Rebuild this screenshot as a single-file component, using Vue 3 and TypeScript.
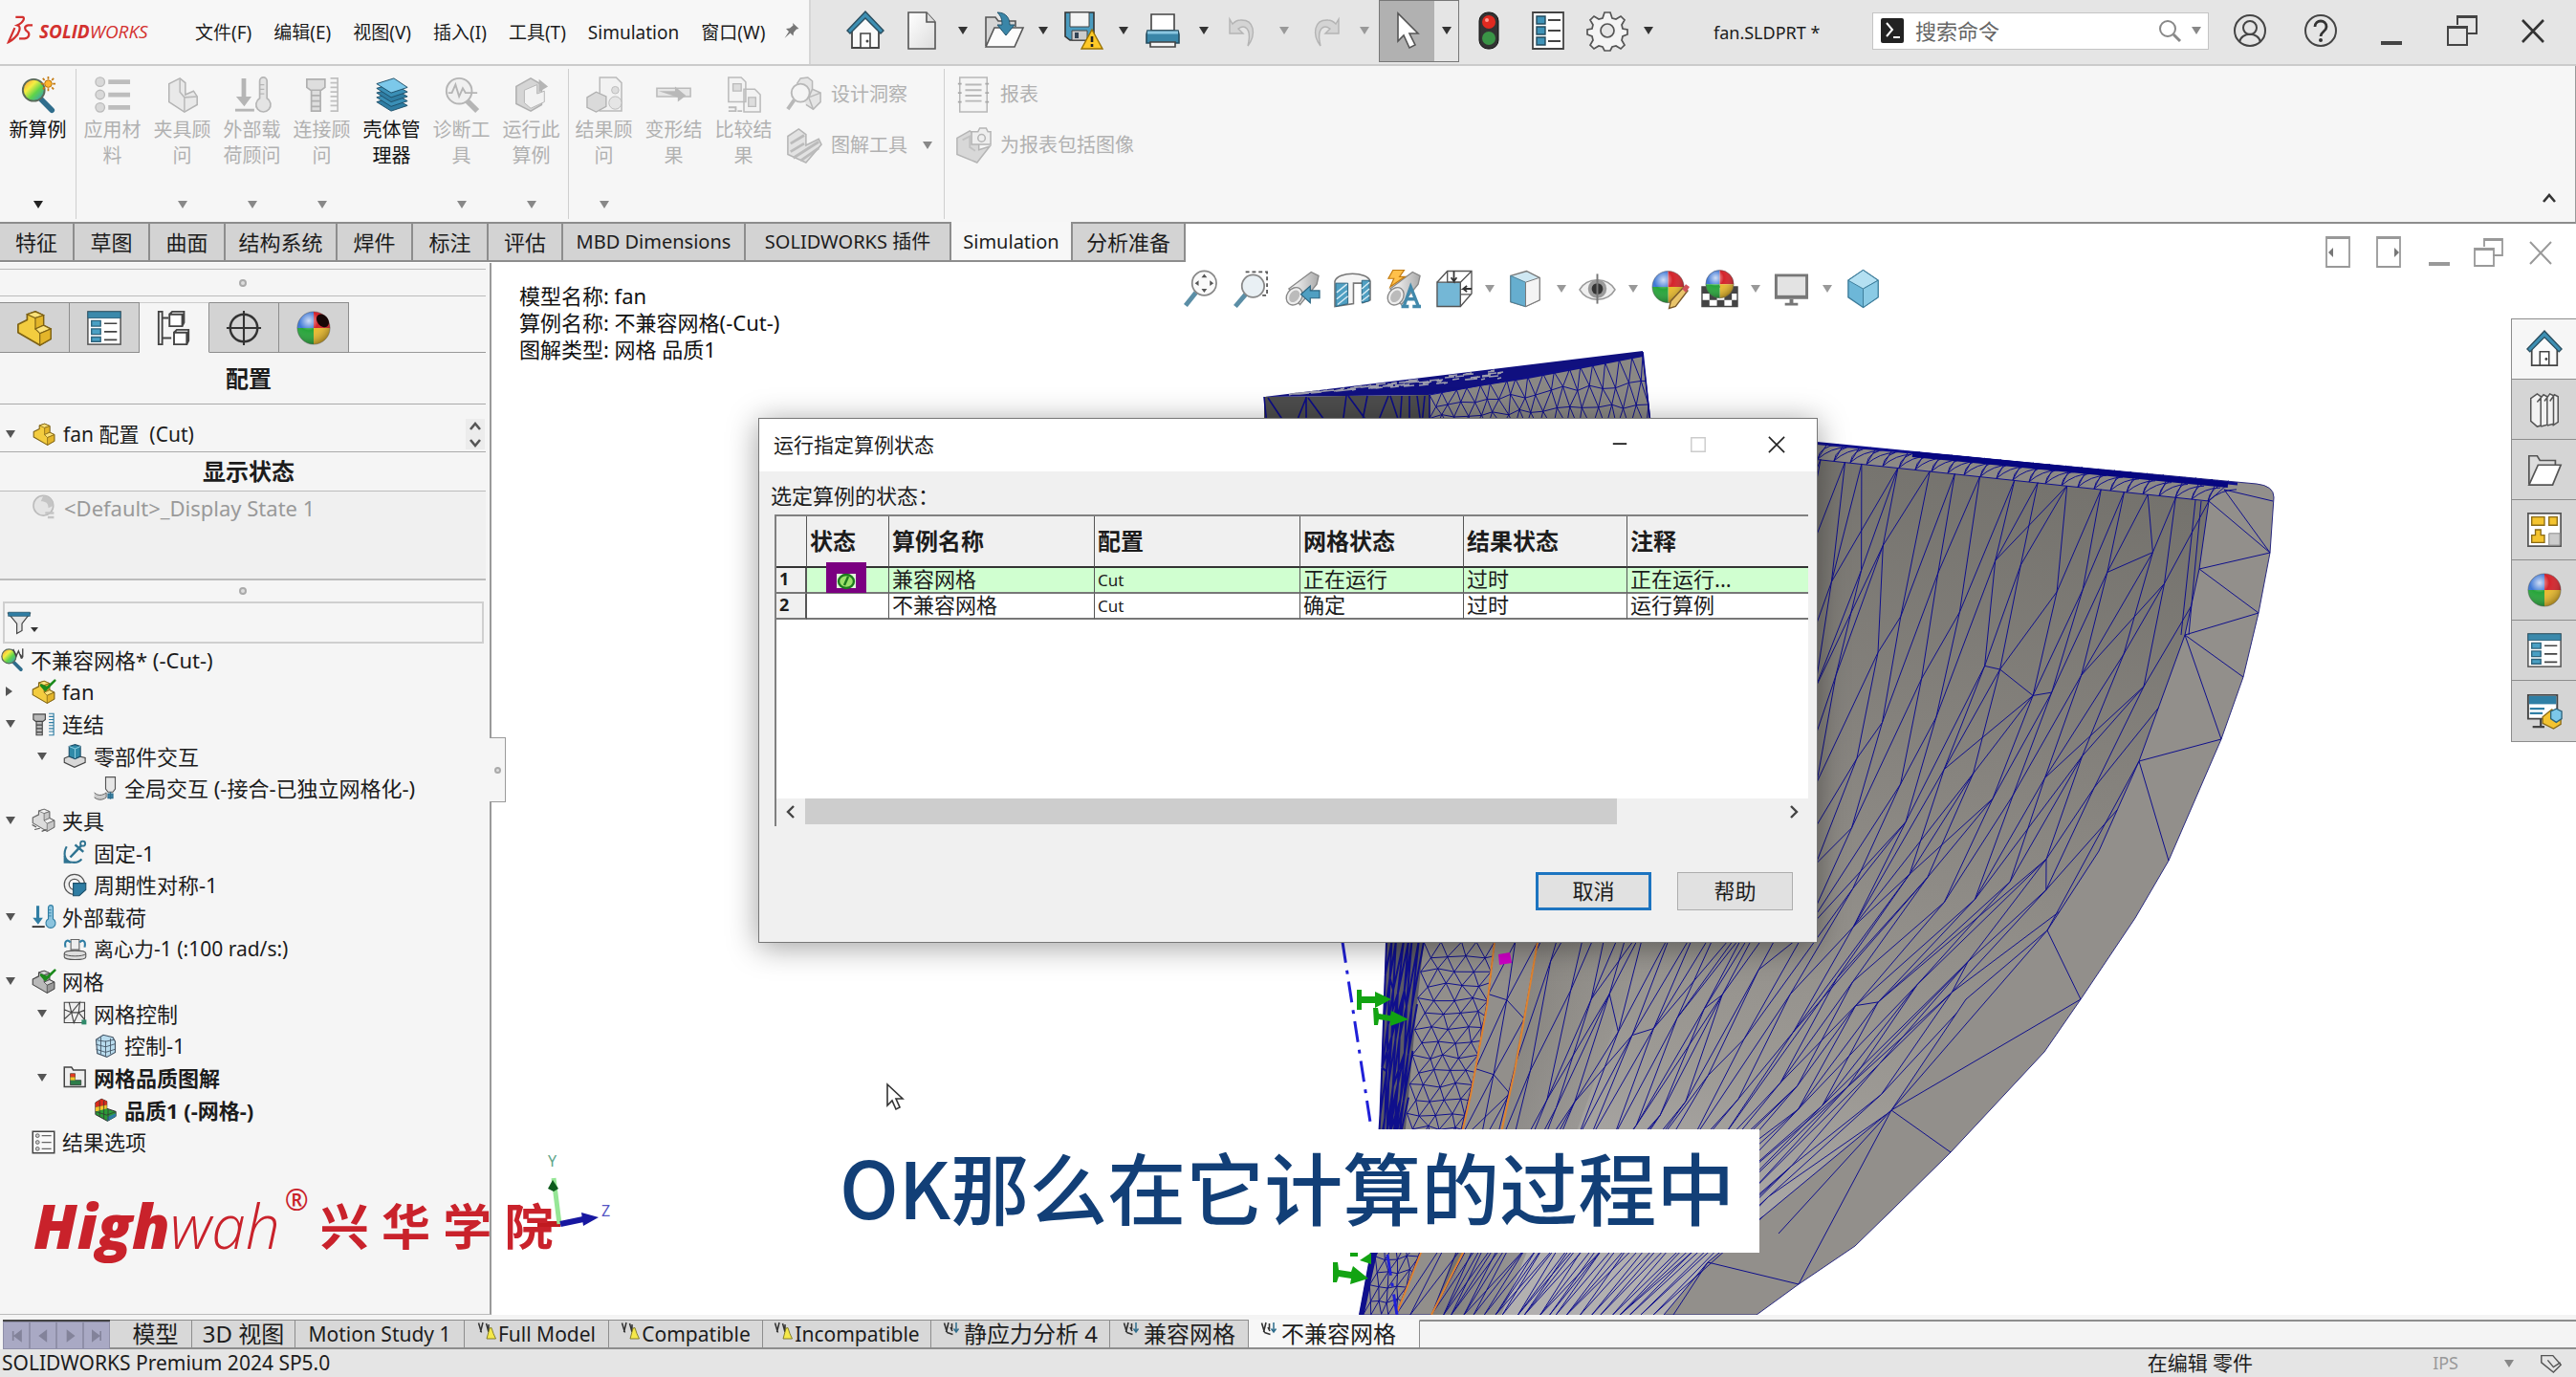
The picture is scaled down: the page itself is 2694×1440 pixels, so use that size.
<script setup lang="ts">
type Pt = [number, number]

/* ---------- icons, all on a 40 x 40 grid ---------- */
const ball = (cx: number, cy: number, r: number): string =>
  `<path d="M${cx} ${cy}V${cy - r}A${r} ${r} 0 0 0 ${cx - r} ${cy}z" fill="#3f78d6"/>` +
  `<path d="M${cx} ${cy}H${cx + r}A${r} ${r} 0 0 0 ${cx} ${cy - r}z" fill="#d4232b"/>` +
  `<path d="M${cx} ${cy}V${cy + r}A${r} ${r} 0 0 0 ${cx + r} ${cy}z" fill="#e8b92c"/>` +
  `<path d="M${cx} ${cy}H${cx - r}A${r} ${r} 0 0 0 ${cx} ${cy + r}z" fill="#27a53a"/>` +
  `<circle cx="${cx}" cy="${cy}" r="${r}" fill="url(#shine)" stroke="#555" stroke-opacity=".5"/>`

const part = (a: string, b: string, c: string, s: string): string =>
  `<path d="M2 16l10-5V5l9-3 9 4v11l8 4v11l-12 7L2 25z" fill="${a}" stroke="${s}" stroke-width="1.8" stroke-linejoin="round"/>` +
  `<path d="M12 5l9-3 9 4-9 3z" fill="${b}" stroke="${s}" stroke-width="1.2"/><path d="M21 9l9-3v11l-9 4z" fill="${c}" stroke="${s}" stroke-width="1.2"/>` +
  `<path d="M21 21l9-4 8 4-12 5z" fill="${b}" stroke="${s}" stroke-width="1.2"/><path d="M26 26l12-5v11l-12 7z" fill="${c}" stroke="${s}" stroke-width="1.2"/>`

const bolt = (f: string, s: string, r: string): string =>
  `<path d="M3 3h20v9l-4 3H7l-4-3zM8 15h10v23H8zM8 21h10M8 27h10M8 33h10" fill="${f}" stroke="${s}" stroke-width="1.8"/>` +
  `<path d="M29 2h8v36h-8M29 7h8M29 12h8M29 17h8M29 22h8M29 27h8M29 32h8" fill="none" stroke="${r}" stroke-width="1.8"/>`

const loads = (a: string, b: string, f: string): string =>
  `<path d="M8 2h5v20h6l-8 11-9-11h6z" fill="${a}"/><path d="M1 37h21" stroke="${b}" stroke-width="3"/>` +
  `<path d="M28 24V5a4 4 0 0 1 8 0v19a8 8 0 1 1-8 0z" fill="${f}" stroke="${a}" stroke-width="1.8"/><path d="M28 9h5M28 14h5M28 19h5" stroke="${a}" stroke-width="1.4"/>`

const check = `<path d="M16 9l7 8L39 1l-13 12z" fill="#1c8a1c" stroke="#1c8a1c" stroke-width="4" stroke-linejoin="round"/>`
const propList = `<rect x="2" y="2" width="36" height="36" fill="#fff" stroke="#555" stroke-width="1.6"/><path d="M2 2h36v7H2z" fill="#3b89ab" stroke="#2d637c"/>` +
  `<path d="M6 12h10v6H6zM6 21h10v6H6zM6 30h10v5H6z" fill="#4aa0c4" stroke="#2d637c" stroke-width="1.4"/><path d="M20 15h14M20 24h14M20 33h14" stroke="#444" stroke-width="1.8"/>`
const lensRainbow = `<path d="M22 24l13 13" stroke="#2f6d8c" stroke-width="6" stroke-linecap="round"/><circle cx="15" cy="15" r="12" fill="url(#rainbow)" stroke="#5a6a5a" stroke-width="2"/>`
const tube = `<path d="M6 20L30 2l8 4-2 9-18 22z" fill="url(#steel)" stroke="#888" stroke-width="1.4"/><ellipse cx="12" cy="28" rx="8" ry="10" transform="rotate(35 12 28)" fill="#eee" stroke="#888" stroke-width="1.4"/><ellipse cx="12" cy="28" rx="5" ry="7" transform="rotate(35 12 28)" fill="#bbb"/>`

const icons: Record<string, string> = {
  home: `<path d="M6 18L20 4l14 14v20H6z" fill="#fafafa" stroke="#444" stroke-width="1.8"/><path d="M1 20L20 0l19 20-3 3L20 7 4 23z" fill="#3d8fb3" stroke="#2a4d5e" stroke-width="1.4"/><path d="M15 38V23h10v15z" fill="#fff" stroke="#444" stroke-width="1.6"/><circle cx="22" cy="31" r="1.5" fill="#444"/>`,
  doc: `<path d="M5 1h19l9 10v28H5z" fill="url(#paper)" stroke="#555" stroke-width="1.6"/><path d="M24 1v10h9" fill="#ddd" stroke="#555" stroke-width="1.6"/>`,
  open: `<path d="M2 36V6h10l3 4h18v6" fill="#d5d5d5" stroke="#555" stroke-width="1.6"/><path d="M2 37L11 17h30l-9 20z" fill="#fcfcfc" stroke="#555" stroke-width="1.6"/><path d="M14 1c10 0 13 7 13 13h5l-9 11-9-11h5c0-6-1-9-5-13z" fill="#3a86a8" stroke="#23536b"/>`,
  save: `<path d="M1 1h30v29H6l-5-4z" fill="#4b9cc0" stroke="#333" stroke-width="1.6"/><path d="M6 1h20v15H6z" fill="#f4f4f4" stroke="#444"/><path d="M8 20h16v10H8z" fill="#ccc" stroke="#444"/><path d="M11 22h4v6h-4z" fill="#345"/><path d="M29 19l11 20H18z" fill="#ffc928" stroke="#9a7200" stroke-width="1.4"/><path d="M29 26v6M29 34v3" stroke="#222" stroke-width="2.6"/>`,
  print: `<path d="M7 3h24v17H7z" fill="#fff" stroke="#444" stroke-width="1.6"/><path d="M3 20h32l1 4v9H2v-9z" fill="#3a86a8" stroke="#234b5e" stroke-width="1.6"/><path d="M3 22h32" stroke="#8ac6e0" stroke-width="3"/><path d="M6 32h26v5H6z" fill="#f5f5f5" stroke="#444" stroke-width="1.6"/>`,
  undo: `<path d="M5 8v15h14l-5-5c7-5 13 0 11 13l-1 5c9-12 7-28-8-27-4 0-6 2-8 4z" fill="#d4d4d4" stroke="#b4b4b4" stroke-width="1.4"/>`,
  redo: `<path d="M35 8v15H21l5-5c-7-5-13 0-11 13l1 5C7 24 9 8 24 9c4 0 6 2 8 4z" fill="#d4d4d4" stroke="#b4b4b4" stroke-width="1.4"/>`,
  cursor: `<path d="M10 2v29l6-6 6 13 6-3-6-12h9z" fill="#fff" stroke="#555" stroke-width="1.6"/>`,
  traffic: `<rect x="10" y="1" width="20" height="38" rx="9" fill="#333" stroke="#111"/><circle cx="20" cy="11" r="7" fill="#e02a20"/><circle cx="20" cy="28" r="7" fill="#3a9446"/><circle cx="18" cy="9" r="2" fill="#ff9a90"/>`,
  list: `<path d="M4 1h32v38H4z" fill="#fff" stroke="#444" stroke-width="1.8"/><path d="M8 5h9v8H8zM8 16h9v8H8zM8 27h9v8H8z" fill="#3f93b8" stroke="#234b5e" stroke-width="1.4"/><path d="M20 9h13M20 20h13M20 31h13" stroke="#444" stroke-width="1.8"/>`,
  gear: `<path d="M17 1h6l2 6 4 1 5-3 4 4-3 5 1 4 5 1v5l-5 2-1 4 3 5-4 4-5-3-4 1-2 4h-6l-2-4-4-1-5 3-4-4 3-5-1-4-5-2v-5l5-1 1-4-3-5 4-4 5 3 4-1z" fill="#f4f4f4" stroke="#555" stroke-width="1.7"/><circle cx="20" cy="20" r="7" fill="#e5e5e5" stroke="#555" stroke-width="1.7"/>`,
  user: `<circle cx="20" cy="20" r="16" fill="none" stroke="#444" stroke-width="2"/><circle cx="20" cy="17" r="7" fill="none" stroke="#444" stroke-width="2"/><path d="M9 32c2-11 20-11 22 0" fill="none" stroke="#444" stroke-width="2"/>`,
  help: `<circle cx="20" cy="20" r="16" fill="none" stroke="#444" stroke-width="2"/><path d="M14 16c0-8 12-8 12 0 0 5-6 5-6 10" fill="none" stroke="#333" stroke-width="2.8"/><circle cx="20" cy="30" r="2" fill="#333"/>`,
  min: `<path d="M9 33h22" stroke="#444" stroke-width="4"/>`,
  restore: `<path d="M15 14V5h20v18H25" fill="none" stroke="#444" stroke-width="2"/><path d="M5 16h20v19H5zM5 17h20M15 6h20" fill="none" stroke="#444" stroke-width="2"/>`,
  close: `<path d="M9 9l22 23M31 9L9 32" stroke="#333" stroke-width="2.6"/>`,
  paneL: `<path d="M8 4h24v31H8zM8 5h24" fill="none" stroke="#999" stroke-width="1.8"/><path d="M15 15l-5 5 5 5z" fill="#777"/>`,
  paneR: `<path d="M8 4h24v31H8zM8 5h24" fill="none" stroke="#999" stroke-width="1.8"/><path d="M26 15l5 5-5 5z" fill="#777"/>`,
  mMin: `<path d="M9 32h22" stroke="#999" stroke-width="4"/>`,
  mRestore: `<path d="M14 14V6h19v17H23" fill="none" stroke="#999" stroke-width="1.8"/><path d="M4 16h20v18H4zM4 17h20M14 7h19" fill="none" stroke="#999" stroke-width="1.8"/>`,
  mClose: `<path d="M9 9l22 23M31 9L9 32" stroke="#999" stroke-width="2"/>`,
  study: lensRainbow + `<circle cx="31" cy="8" r="4" fill="#ffb52e" stroke="#b36b00"/><path d="M31 0v3M31 13v3M23 8h3M36 8h3M25 2l2 2M35 12l2 2M37 2l-2 2M27 12l-2 2" stroke="#c47a10" stroke-width="1.8"/>`,
  material: `<g fill="#d9d9d9" stroke="#bbb" stroke-width="1.4"><circle cx="6" cy="6" r="5"/><circle cx="6" cy="20" r="5"/><circle cx="6" cy="34" r="5"/></g><path d="M15 6h24M15 20h24M15 34h24" stroke="#bdbdbd" stroke-width="5"/>`,
  fixture: `<path d="M5 8l12-6 6 5v13l9-4 4 6v9l-14 8L5 28z" fill="#e9e9e9" stroke="#b4b4b4" stroke-width="1.6"/><path d="M17 2v15l5 6 14-1M22 23v16" fill="none" stroke="#b9b9b9" stroke-width="1.6"/>`,
  loadsGray: loads('#b5b5b5', '#b5b5b5', '#e4e4e4'),
  boltGray: bolt('#dedede', '#b0b0b0', '#c0c0c0'),
  shell: `<path d="M3 28l16 10 18-6-16-9z" fill="#2f7da3" stroke="#1d4f69"/><path d="M3 23l16 10 18-6-16-9z" fill="#3a8fb6" stroke="#1d4f69"/><path d="M3 18l16 10 18-6-16-9z" fill="#2f7da3" stroke="#1d4f69"/><path d="M3 13l16 10 18-6-16-9z" fill="#3a8fb6" stroke="#1d4f69"/><path d="M3 8l19-6 15 10-18 6z" fill="#7cc8ea" stroke="#1d4f69"/>`,
  diag: `<path d="M25 26l12 12" stroke="#b5b5b5" stroke-width="6"/><circle cx="17" cy="16" r="14" fill="#f0f0f0" stroke="#b5b5b5" stroke-width="2"/><path d="M5 18h4l4-9 4 13 4-9 3 5h13" fill="none" stroke="#b5b5b5" stroke-width="2"/>`,
  run: `<path d="M3 11L19 2l12 7v22L19 38 3 30z" fill="#d5d5d5" stroke="#b0b0b0" stroke-width="1.6"/><path d="M12 15l14-6v10l8-3v12l-15 7-7-6z" fill="#f2f2f2" stroke="#b5b5b5"/><path d="M28 3l10 8-10 6z" fill="#b5b5b5"/>`,
  results: `<path d="M15 1h18l6 6v31H15z" fill="#f2f2f2" stroke="#bbb" stroke-width="1.6"/><circle cx="32" cy="15" r="4" fill="#ddd" stroke="#bbb"/><circle cx="32" cy="29" r="7" fill="#e5e5e5" stroke="#bbb"/><path d="M1 23l10-6 11 5v11l-11 6-10-5z" fill="#dadada" stroke="#b0b0b0" stroke-width="1.4"/>`,
  deform: `<path d="M1 13h37v9H1z" fill="#e6e6e6" stroke="#bbb" stroke-width="1.6"/><path d="M3 16h18v-5l12 10-9 7v-5" fill="#b9b9b9"/>`,
  compare: `<path d="M3 1h14l5 5v22H3zM20 14h12l6 6v19H20z" fill="#f3f3f3" stroke="#bbb" stroke-width="1.6"/><path d="M8 8h9v8H8zM25 23h8v10h-8z" fill="#ddd" stroke="#bbb" stroke-width="1.4"/><path d="M3 34h8v4H3M13 38h5" fill="none" stroke="#bbb" stroke-width="2"/>`,
  insight: `<path d="M12 8l4-6 8-1 5 4v9l9 4v10l-8 8-8-5" fill="#e5e5e5" stroke="#b8b8b8" stroke-width="1.6"/><path d="M29 14l-4 9 5 13M25 23l13-5" fill="none" stroke="#b8b8b8" stroke-width="1.6"/><circle cx="16" cy="18" r="10" fill="#f4f4f4" stroke="#b8b8b8" stroke-width="2"/><path d="M9 26L2 36" stroke="#b8b8b8" stroke-width="4"/>`,
  plottools: `<path d="M2 10l12-8 8 6v12l14-7 3 6-17 20-20-9z" fill="#e2e2e2" stroke="#b5b5b5" stroke-width="1.6"/><path d="M5 18l15-9M5 27l15-9M8 34l28-18M16 37l20-14" stroke="#bbb" stroke-width="3"/>`,
  report: `<path d="M5 1h30v38H5z" fill="#f5f5f5" stroke="#b8b8b8" stroke-width="1.6"/><path d="M11 9h18M11 15h18M11 21h18M11 27h18" stroke="#b8b8b8" stroke-width="2"/><path d="M3 8h4M3 18h4M3 28h4M33 8h4M33 18h4M33 28h4" stroke="#aaa" stroke-width="2"/>`,
  reportimg: `<path d="M2 12l14-8 10 8v13l12-4-14 18L2 30z" fill="#d8d8d8" stroke="#b5b5b5" stroke-width="1.6"/><path d="M8 14l8-4v12l6 4" fill="none" stroke="#c2c2c2" stroke-width="2"/><path d="M18 5h7l2-4h7l2 4h3v14H18z" fill="#eee" stroke="#b5b5b5" stroke-width="1.6"/><circle cx="29" cy="12" r="4" fill="none" stroke="#b5b5b5" stroke-width="1.6"/>`,
  part: part('#f3cc3f', '#fbe27a', '#e3b52a', '#7d6114'),
  props: propList,
  config: `<path d="M3 2h4v36H3zM7 9h7M7 31h10" fill="none" stroke="#444" stroke-width="2"/><path d="M15 5h14v13H15zM15 5l3-3h13v12l-2 4M20 25h14v13H20zM20 25l3-3h13v12l-2 4" fill="#fff" stroke="#444" stroke-width="2"/>`,
  target: `<circle cx="20" cy="20" r="15" fill="none" stroke="#333" stroke-width="2.6"/><path d="M20 1v38M1 20h38" stroke="#333" stroke-width="2.2"/>`,
  ball: ball(20, 20, 18),
  ballDark: ball(20, 20, 18) + `<ellipse cx="30" cy="12" rx="8" ry="6" transform="rotate(50 30 12)" fill="#160606"/>`,
  zoomfit: `<path d="M15 24L4 38" stroke="#5b8ea6" stroke-width="5"/><ellipse cx="24" cy="14" rx="13" ry="13" fill="#fafafa" stroke="#888" stroke-width="1.8"/><path d="M24 4l3 4h-6zM24 24l3-4h-6zM14 14l4-3v6zM34 14l-4-3v6z" fill="#555"/>`,
  zoomarea: `<path d="M14 26L3 39" stroke="#5b8ea6" stroke-width="5"/><circle cx="22" cy="17" r="12" fill="#e9f0f4" stroke="#888" stroke-width="1.8"/><path d="M14 2h23v25H32" fill="none" stroke="#555" stroke-width="1.8" stroke-dasharray="4 3"/>`,
  prev: tube + `<path d="M39 22H29v-5l-10 9 10 9v-5h10z" fill="#4f9fc2" stroke="#2b6480" stroke-width="1.2"/>`,
  section: `<path d="M1 12C4 1 36 1 39 12v20l-8 3V14H21v22L1 39z" fill="#f4f4f4" stroke="#777" stroke-width="1.6"/><path d="M2 14h13v22l-13 3zM30 11h8v22l-8 2z" fill="#4f9fc2" stroke="#2b6480"/><path d="M3 24l11-9M3 31l11-9M4 37l11-9M30 20l8-7M30 27l8-7M30 33l8-6" stroke="#dceef6" stroke-width="1.4"/>`,
  annot: tube + `<path d="M9 0h12l-5 7h6L6 18l4-9H4z" fill="#ffc04a" stroke="#c27a10" stroke-width="1.2"/><path d="M18 39h8M30 39h9M21 38l7-20 8 20M24 31h9" fill="none" stroke="#4289ab" stroke-width="3.4"/>`,
  orient: `<path d="M2 13h25v26H2z" fill="#74b7d6" stroke="#555" stroke-width="1.4"/><path d="M2 13L13 1h26v24L27 39M27 13L39 1M13 1v12M27 13h-14M27 26h12" fill="none" stroke="#555" stroke-width="1.4"/><path d="M20 1v11l-3-4M20 12l3-4M39 20h-9l4-3M30 20l4 3" fill="none" stroke="#333" stroke-width="1.8"/>`,
  display: `<path d="M4 6l17-5 14 7v24l-15 7L4 34z" fill="#cfe8f3" stroke="#777" stroke-width="1.4"/><path d="M4 6l16 7v26L4 34z" fill="#66aecf" stroke="#4b7f98"/><path d="M20 13l15-5v24l-15 7z" fill="#f4f4f4" stroke="#777"/>`,
  eye: `<path d="M1 21C9 7 31 7 39 21 31 35 9 35 1 21z" fill="#efefef" stroke="#999" stroke-width="1.6"/><circle cx="20" cy="20" r="10" fill="#9a9a9a"/><circle cx="20" cy="20" r="6" fill="#333"/><path d="M20 4v32" stroke="#777" stroke-width="2"/>`,
  appearance: ball(19, 18, 17) + `<path d="M36 18l4 4-13 17-7 2 2-8z" fill="#e9c46a" stroke="#7a5a2a" stroke-width="1.4"/><path d="M34 20l4-5 4 3-4 6z" fill="#d0505a"/>`,
  scene: `<path d="M1 18h38v21H1z" fill="#fff" stroke="#444" stroke-width="1.4"/><path d="M1 18h8v7H1zM9 25h8v7H9zM25 25h8v7h-8zM1 32h8v7H1zM17 32h8v7h-8zM33 32h6v7h-6zM31 18h8v7h-8z" fill="#444"/>` + ball(20, 15, 15),
  monitor: `<path d="M2 4h36v27H2z" fill="#777"/><path d="M5 7h30v20H5z" fill="#e3e3e3"/><path d="M18 31h4v5h-4zM13 35h14v3H13z" fill="#777"/>`,
  cube: `<path d="M20 0l16 11v18L20 40 4 29V11z" fill="#6db7d8" stroke="#3d7c9a" stroke-width="1.4"/><path d="M20 0l16 11-16 9L4 11z" fill="#b4e0f2" stroke="#3d7c9a"/><path d="M20 20l16-9v18L20 40z" fill="#8bcbe5" stroke="#3d7c9a"/>`,
  library: `<path d="M5 8l7-5 4 3v32l-4 1-7-6zM12 12l7-8 4 2v31l-7 2M20 11l6-8 4 2v31l-7 2M26 11l5-7 4 2v28l-6 4" fill="#f2f2f2" stroke="#555" stroke-width="1.6"/>`,
  folder: `<path d="M3 36V5h9l3 5h17v6" fill="#ddd" stroke="#555" stroke-width="1.8"/><path d="M3 37l10-22h25l-9 22z" fill="#fff" stroke="#555" stroke-width="1.8"/>`,
  palette: `<path d="M2 2h36v36H2z" fill="#fff" stroke="#555" stroke-width="1.8"/><path d="M6 6h14v9H6zM25 6h9v9h-9zM10 20h6v6h4v8H6v-8h4z" fill="#f4c430" stroke="#8a6a14" stroke-width="1.4"/><path d="M25 24h12v13H25z" fill="#ccc" stroke="#888"/>`,
  forum: `<path d="M2 2h32v26H2z" fill="#fff" stroke="#444" stroke-width="2"/><path d="M3 3h30v9H3z" fill="#2f7fa5"/><path d="M4 17h16M4 22h14" stroke="#2f7fa5" stroke-width="2.4"/><path d="M16 28v9M7 37h13" stroke="#444" stroke-width="2.4"/><path d="M18 26l10-8 10 4v12l-8 5-12-6z" fill="#f4c430" stroke="#8a6a14" stroke-width="1.4"/><path d="M27 20l6-3 6 3v8l-6 4-6-4z" fill="#7cc8ea" stroke="#2d637c" stroke-width="1.4"/>`,
  tStudy: lensRainbow + `<path d="M22 3l5 12 4-9 5 13M38 2v14M34 12l4 6" stroke="#444" stroke-width="2.2" fill="none"/>`,
  tPart: part('#f3cc3f', '#fbe27a', '#e3b52a', '#7d6114') + check,
  tMesh: part('#b9b9b9', '#d8d8d8', '#9a9a9a', '#444') + check,
  tBolt: bolt('#b9b9b9', '#444', '#2f7da3'),
  tComp: `<path d="M2 24l14-6 21 5v8l-18 8L2 31z" fill="#d8d8d8" stroke="#444" stroke-width="1.8"/><path d="M10 4l10-3 9 3v17l-9 4-10-4z" fill="#2f8aa8" stroke="#1d4f69" stroke-width="1.8"/><path d="M10 4l10 4 9-4M20 8v16" fill="none" stroke="#9ad8ea" stroke-width="1.4"/>`,
  tGlobal: `<path d="M20 1h16v20l-4 5h-8l-4-5z" fill="#e6e6e6" stroke="#555" stroke-width="1.8"/><path d="M28 26v12M24 29h8v7h-8z" stroke="#2f6d8c" fill="#3a86a8" stroke-width="2"/><path d="M1 27c6 6 14 5 20 0v8c-6 5-14 5-20 0" fill="#ccc" stroke="#666" stroke-width="1.6"/>`,
  tFix: part('#dcdcdc', '#f2f2f2', '#c8c8c8', '#666') + `<path d="M1 28l7 4M5 36l9-2M17 39l8-3" stroke="#555" stroke-width="2"/>`,
  tAnchor: `<path d="M30 9L12 28M20 7l14 12" stroke="#2f7391" stroke-width="4"/><circle cx="33" cy="5" r="4" fill="none" stroke="#2f7391" stroke-width="3"/><path d="M6 10C0 20 2 34 12 36s16-1 19-5" fill="none" stroke="#2f7391" stroke-width="3.4"/><path d="M1 25v13h13z" fill="#2f7391"/>`,
  tCyclic: `<circle cx="19" cy="19" r="17" fill="#f0f0f0" stroke="#555" stroke-width="2"/><circle cx="19" cy="19" r="9" fill="#fff" stroke="#555" stroke-width="2"/><path d="M17 17h21v11L27 38H17z" fill="#2f7da3" stroke="#1d4f69" stroke-width="1.8"/>`,
  tLoads: loads('#2f7da3', '#333', '#8cc4de'),
  tCentr: `<path d="M13 4h14v17H13z" fill="#eee" stroke="#666" stroke-width="1.8"/><path d="M4 17C1 4 10 4 12 9M36 17c3-13-6-13-8-8" fill="none" stroke="#2f7da3" stroke-width="3.4"/><path d="M2 27c0-6 36-6 36 0v6c0 6-36 6-36 0z" fill="#ddd" stroke="#555" stroke-width="1.8"/><path d="M2 28c4 5 32 5 36 0" fill="none" stroke="#555" stroke-width="1.6"/>`,
  tMeshCtl: `<path d="M2 2h34v34H2zM2 14l12 5L10 2M14 19L28 2l-2 17 10-4M14 19L2 30M14 19l4 17 8-17 10 12M14 19h12" fill="#eee" stroke="#444" stroke-width="1.8"/><path d="M31 31h8v8h-8z" fill="#2f8a6a"/>`,
  tCtl: `<path d="M4 10l12-8 16 4 4 7v18l-14 8L6 33z" fill="#b9dcee" stroke="#456" stroke-width="1.8"/><path d="M12 6v28M20 12v26M28 8v26M4 18l16 4 16-5M4 26l16 5 16-5M6 11l14 2 14-3" fill="none" stroke="#456" stroke-width="1.4"/>`,
  tPlots: `<path d="M2 36V3h12l3 5h20v28z" fill="#eee" stroke="#444" stroke-width="2.4"/><path d="M12 14h8v11h10v8H12z" fill="#2f7d4a" stroke="#222"/><path d="M12 14h8v6h-8z" fill="#e03a20"/><path d="M12 20h8v5h-8z" fill="#f2c52a"/>`,
  tQuality: `<path d="M3 8l10-6 9 4v12l15 5v8l-14 8L3 28z" fill="#2b9a38" stroke="#333" stroke-width="1.6"/><path d="M3 8l10-6 9 4v6L3 16z" fill="#d92c1c"/><path d="M3 16l19-4v6L3 23z" fill="#f2c52a"/><path d="M23 32l14-6v5l-14 8z" fill="#2f7da3"/><path d="M10 5v26M17 5v30M24 20v18M3 23l19 6 15-6" stroke="#333" stroke-width="1.2" fill="none"/>`,
  tOptions: `<path d="M2 2h36v36H2z" fill="#f8f8f8" stroke="#444" stroke-width="2.4"/><g fill="#ccc" stroke="#555" stroke-width="1.4"><circle cx="10" cy="9" r="3"/><circle cx="10" cy="20" r="3"/><circle cx="10" cy="31" r="3"/></g><path d="M17 9h16M17 20h16M17 31h16" stroke="#666" stroke-width="2"/>`,
  tState: `<circle cx="19" cy="18" r="16" fill="#e4e4e4" stroke="#bbb" stroke-width="2.4"/><path d="M19 2a16 16 0 0 1 16 16l-8 4c0-8-4-11-12-11z" fill="#c4c4c4"/><path d="M22 28h14v4H22zM26 35h10v4H26z" fill="#c4c4c4"/>`,
  filter: `<path d="M1 4h38L25 22v12l-9 5V22z" fill="#e6e6e6" stroke="#444" stroke-width="2"/><path d="M1 2h38v7H1z" fill="#2f7da3" stroke="#234b5e"/>`,
  mini: `<path d="M3 3l6 20M12 2l-5 20M19 4v12M16 12l4 8M9 23l12 4" fill="none" stroke="#333" stroke-width="3.2"/><path d="M28 2v18M23 15l5 7 5-7" fill="none" stroke="#2f6d8c" stroke-width="3"/>`,
  miniY: `<path d="M3 3l6 20M12 2l-5 20M19 4l5 18M24 6v14" fill="none" stroke="#333" stroke-width="3"/><path d="M20 36l6-22 4-1 4 12 5 11z" fill="#f5e84a" stroke="#7a7420" stroke-width="1.8"/>`,
  pin: `<path d="M22 4l13 12-5 1-6 7-1 7-6-6L5 36l9-14-6-6 8-1 7-6z" fill="#777"/>`,
  tag: `<path d="M3 6h20l14 16-13 13L3 18z" fill="none" stroke="#555" stroke-width="2.4"/><path d="M14 14l10 12 12-8" fill="none" stroke="#555" stroke-width="2.4"/>`,
}

/* ---------- bars ---------- */
const menus = ['文件(F)', '编辑(E)', '视图(V)', '插入(I)', '工具(T)', 'Simulation', '窗口(W)']
const quick = [
  { icon: 'doc', label: '新建' }, { icon: 'open', label: '打开' }, { icon: 'save', label: '保存' },
  { icon: 'print', label: '打印' }, { icon: 'undo', label: '撤消', off: true }, { icon: 'redo', label: '重做', off: true },
]
const winButtons = [
  { icon: 'user', label: '登录' }, { icon: 'help', label: '帮助' }, { icon: 'min', label: '最小化' },
  { icon: 'restore', label: '还原' }, { icon: 'close', label: '关闭' },
]
const docButtons = ['paneL', 'paneR', 'mMin', 'mRestore', 'mClose']

interface Cmd { text: [string, string]; icon: string; on?: boolean; drop?: boolean }
const studyCmds: Cmd[] = [
  { text: ['应用材', '料'], icon: 'material' },
  { text: ['夹具顾', '问'], icon: 'fixture', drop: true },
  { text: ['外部载', '荷顾问'], icon: 'loadsGray', drop: true },
  { text: ['连接顾', '问'], icon: 'boltGray', drop: true },
  { text: ['壳体管', '理器'], icon: 'shell', on: true },
  { text: ['诊断工', '具'], icon: 'diag', drop: true },
  { text: ['运行此', '算例'], icon: 'run', drop: true },
]
const resultCmds: Cmd[] = [
  { text: ['结果顾', '问'], icon: 'results', drop: true },
  { text: ['变形结', '果'], icon: 'deform' },
  { text: ['比较结', '果'], icon: 'compare' },
]
const groups: Cmd[][] = [[{ text: ['新算例', ''], icon: 'study', on: true, drop: true }], studyCmds, resultCmds]

const cmdTabs = [
  { t: '特征', w: 78 }, { t: '草图', w: 79 }, { t: '曲面', w: 79 }, { t: '结构系统', w: 117 }, { t: '焊件', w: 79 },
  { t: '标注', w: 79 }, { t: '评估', w: 78 }, { t: 'MBD Dimensions', w: 191, latin: true }, { t: 'SOLIDWORKS 插件', w: 215, latin: true },
  { t: 'Simulation', w: 127, latin: true, sel: true }, { t: '分析准备', w: 118 },
]
const docTabs = [
  { t: '模型', w: 86, first: true }, { t: '3D 视图', w: 108 }, { t: 'Motion Study 1', w: 177, latin: true },
  { t: 'Full Model', w: 151, latin: true, icon: 'miniY' }, { t: 'Compatible', w: 161, latin: true, icon: 'miniY' },
  { t: 'Incompatible', w: 176, latin: true, icon: 'miniY' }, { t: '静应力分析 4', w: 187, icon: 'mini' },
  { t: '兼容网格', w: 145, icon: 'mini' }, { t: '不兼容网格', w: 179, icon: 'mini', sel: true },
]
const panelTabs = ['part', 'props', 'config', 'target', 'ballDark']
const viewTools = [
  { icon: 'zoomfit' }, { icon: 'zoomarea' }, { icon: 'prev' }, { icon: 'section' }, { icon: 'annot' },
  { icon: 'orient', drop: true }, { icon: 'display', drop: true }, { icon: 'eye', drop: true },
  { icon: 'appearance' }, { icon: 'scene', drop: true }, { icon: 'monitor', drop: true }, { icon: 'cube' },
]
const taskTabs = ['home', 'library', 'folder', 'palette', 'ball', 'props', 'forum']

const tree = [
  { t: '不兼容网格* (-Cut-)', icon: 'tStudy', lv: 0 },
  { t: 'fan', icon: 'tPart', lv: 1, open: false, arrow: true },
  { t: '连结', icon: 'tBolt', lv: 1, open: true, arrow: true },
  { t: '零部件交互', icon: 'tComp', lv: 2, open: true, arrow: true },
  { t: '全局交互 (-接合-已独立网格化-)', icon: 'tGlobal', lv: 3 },
  { t: '夹具', icon: 'tFix', lv: 1, open: true, arrow: true },
  { t: '固定-1', icon: 'tAnchor', lv: 2 },
  { t: '周期性对称-1', icon: 'tCyclic', lv: 2 },
  { t: '外部载荷', icon: 'tLoads', lv: 1, open: true, arrow: true },
  { t: '离心力-1 (:100 rad/s:)', icon: 'tCentr', lv: 2, small: true },
  { t: '网格', icon: 'tMesh', lv: 1, open: true, arrow: true },
  { t: '网格控制', icon: 'tMeshCtl', lv: 2, open: true, arrow: true },
  { t: '控制-1', icon: 'tCtl', lv: 3 },
  { t: '网格品质图解', icon: 'tPlots', lv: 2, open: true, arrow: true, bold: true },
  { t: '品质1 (-网格-)', icon: 'tQuality', lv: 3, bold: true },
  { t: '结果选项', icon: 'tOptions', lv: 1 },
]

const studyRows = [
  { n: 1, name: '兼容网格', cfg: 'Cut', mesh: '正在运行', res: '过时', note: '正在运行...', run: true },
  { n: 2, name: '不兼容网格', cfg: 'Cut', mesh: '确定', res: '过时', note: '运行算例', run: false },
]

/* ---------- finite-element mesh of the fan blade ---------- */
const rnd = (i: number, j: number, k: number): number => {
  const s = Math.sin(i * 127.1 + j * 311.7 + k * 74.7) * 43758.5453
  return s - Math.floor(s)
}
function along(c: Pt[], t: number): Pt {
  const first = c[0], last = c[c.length - 1]
  const y = first[1] + (last[1] - first[1]) * t
  for (let i = 1; i < c.length; i++) {
    if (y <= c[i][1] || i === c.length - 1) {
      const f = (y - c[i - 1][1]) / (c[i][1] - c[i - 1][1])
      return [c[i - 1][0] + (c[i][0] - c[i - 1][0]) * f, y]
    }
  }
  return last
}
function mix(l: Pt[], r: Pt[], u: number, v: number): string {
  const a = along(l, v), b = along(r, v)
  return `${(a[0] + (b[0] - a[0]) * u).toFixed(1)} ${(a[1] + (b[1] - a[1]) * u).toFixed(1)}`
}
/* long slivers: every column runs on its own phase, so the row breaks are staggered */
function slivers(l: Pt[], r: Pt[], cols: number, rows: number, cross: number): string {
  const node = (i: number, j: number): string => {
    const u = i === 0 || i === cols ? i / cols : (i + (rnd(i, j, 1) - 0.5) * 0.6) / cols
    const v = (j + (j === 0 || j === rows ? 0 : (rnd(i, 7, 2) - 0.5) * 0.9)) / rows
    return mix(l, r, u, v)
  }
  let d = ''
  for (let j = 0; j < rows; j++) {
    for (let i = 0; i <= cols; i++) {
      const p = node(i, j)
      if (i < cols) d += `M${p}L${node(i, j + 1)}`
      if (i > 0) d += `M${p}L${node(i - 1, j + 1)}`
      if (i > 1 && rnd(i, j, 4) < 0.3) d += `M${p}L${node(i - 2, j + 1)}`
      if (j > 0 && i < cols && rnd(i, j, 3) < cross) d += `M${p}L${node(i + 1, j)}`
    }
  }
  return d
}
/* near-equilateral triangles, odd rows shifted by half a cell */
function lattice(l: Pt[], r: Pt[], cols: number, rows: number, jit: number): string {
  const node = (i: number, j: number): string => {
    const shift = j % 2 ? 0.5 : 0
    const n = (rnd(i, j, 6) - 0.5) * jit
    const u = Math.min(1, Math.max(0, (i + shift + (i > 0 ? n : 0)) / cols))
    const v = Math.min(1, Math.max(0, (j + (j > 0 ? (rnd(i, j, 8) - 0.5) * jit : 0)) / rows))
    return mix(l, r, u, v)
  }
  let d = ''
  for (let j = 0; j < rows; j++) {
    for (let i = 0; i <= cols; i++) {
      const p = node(i, j)
      const side = j % 2 ? i + 1 : i - 1
      d += `M${p}L${node(i, j + 1)}`
      if (side >= 0 && side <= cols) d += `M${p}L${node(side, j + 1)}`
      if (i < cols) d += `M${p}L${node(i + 1, j)}`
    }
  }
  return d
}
const bladeL: Pt[] = [[1660, 454], [1640, 800], [1608, 985], [1595, 1060], [1584, 1120], [1571, 1180], [1530, 1310], [1497, 1375]]
const bladeR: Pt[] = [[2310, 524], [2300, 595], [2285, 664], [2237, 796], [2195, 890], [2141, 973], [2056, 1045], [1978, 1161], [1786, 1320], [1740, 1375]]
const orangeL: Pt[] = [[1563, 985], [1555, 1053], [1538, 1145], [1530, 1180], [1486, 1310], [1460, 1375]]
const orangeR: Pt[] = [[1608, 985], [1595, 1060], [1584, 1120], [1571, 1180], [1530, 1310], [1497, 1375]]
const fineL: Pt[] = [[1489, 985], [1481, 1060], [1470, 1180], [1439, 1310], [1426, 1375]]
const sideL: Pt[] = [[1450, 985], [1443, 1180], [1434, 1310], [1422, 1375]]
const pts = (c: Pt[]): string => c.map((p) => p.join(',')).join(' ')

const bladeMesh = slivers(bladeL, bladeR, 22, 8, 0.16)
const stripMesh = slivers(orangeL, orangeR, 2, 5, 0.8)
const fineMesh = lattice(fineL, orangeL, 4, 26, 0.35)
const sideMesh = slivers(sideL, fineL, 7, 8, 0.2)
const capMesh = lattice([[1495, 413], [1495, 448]], [[1718, 372], [1727, 448]], 17, 3, 0.4)
let bevel = ''
for (let k = 0; k < 25; k++) {
  const x = 1901 + k * 17
  const yb = 480 + k * 1.83, yt = 464 + k * 1.58
  bevel += `M${x} ${yb}q2 -14 22 -${(yb - yt - 1).toFixed(1)}M${x} ${yb}l10 -${(yb - yt).toFixed(1)}M${x} ${yb}q14 -12 30 -12`
}
let speckle = ''
for (let k = 0; k < 90; k++) {
  const t = rnd(k, 3, 5) * 0.6
  const x = 1345 + t * 370
  speckle += `M${x.toFixed(0)} ${(413 - t * 44 + rnd(k, 1, 9) * 18 * t).toFixed(0)}l${(3 + rnd(k, 2, 2) * 8).toFixed(0)} -1`
}
</script>

<template>
  <div class="app">
    <svg class="defs" aria-hidden="true">
      <defs>
        <radialGradient id="shine" cx=".35" cy=".28" r=".75"><stop offset="0" stop-color="#fff" stop-opacity=".75" /><stop offset=".4" stop-color="#fff" stop-opacity="0" /><stop offset="1" stop-color="#000" stop-opacity=".3" /></radialGradient>
        <linearGradient id="rainbow" x1="0" y1="0" x2="1" y2="1"><stop offset="0" stop-color="#ff8a3a" /><stop offset=".35" stop-color="#f4ee42" /><stop offset=".6" stop-color="#5fd44a" /><stop offset="1" stop-color="#2f8fd8" /></linearGradient>
        <linearGradient id="steel"><stop offset="0" stop-color="#fff" /><stop offset="1" stop-color="#aaa" /></linearGradient>
        <linearGradient id="paper" x1="0" y1="0" x2="1" y2="1"><stop offset="0" stop-color="#fff" /><stop offset="1" stop-color="#ddd" /></linearGradient>
      </defs>
    </svg>

    <header class="title">
      <div class="menus">
        <svg class="brand" viewBox="0 0 30 32" aria-hidden="true"><path d="M10 2h8c3 1 0 6-4 8l-2 1c5 1 2 10-3 14-2 2-4 4-7 5L9 14M29 11h-5c-5 1-4 5-1 7s3 7-3 8h-6" fill="none" stroke="#d3312f" stroke-width="2.4" /></svg>
        <span class="word"><b>SOLID</b>WORKS</span>
        <nav class="menubar"><button v-for="m in menus" :key="m">{{ m }}</button></nav>
        <svg class="pin" viewBox="0 0 40 40" v-html="icons.pin" />
      </div>
      <div class="tools">
        <button class="tool" aria-label="主页"><svg viewBox="0 0 40 40" v-html="icons.home" /></button>
        <template v-for="q in quick" :key="q.icon">
          <button class="tool" :aria-label="q.label"><svg viewBox="0 0 40 40" v-html="icons[q.icon]" /></button>
          <button class="drop" :class="{ off: q.off }" :aria-label="q.label + '选项'"><i class="tri" /></button>
        </template>
        <div class="select">
          <button class="tool pressed" aria-label="选择"><svg viewBox="0 0 40 40" v-html="icons.cursor" /></button>
          <button class="drop" aria-label="选择选项"><i class="tri" /></button>
        </div>
        <button class="tool wide" aria-label="重建"><svg viewBox="0 0 40 40" v-html="icons.traffic" /></button>
        <button class="tool wide" aria-label="文件属性"><svg viewBox="0 0 40 40" v-html="icons.list" /></button>
        <button class="tool wide" aria-label="选项"><svg viewBox="0 0 40 40" v-html="icons.gear" /></button>
        <button class="drop" aria-label="更多选项"><i class="tri" /></button>
        <span class="file">fan.SLDPRT *</span>
        <label class="search">
          <svg class="prompt" viewBox="0 0 24 26"><rect width="24" height="26" rx="2" fill="#222" /><path d="M6 5l6 7-6 7M13 20h7" fill="none" stroke="#fff" stroke-width="2" /></svg>
          <input type="text" placeholder="搜索命令" aria-label="搜索命令" />
          <svg class="lens" viewBox="0 0 24 24"><circle cx="10" cy="10" r="8" fill="none" stroke="#888" stroke-width="2" /><path d="M16 16l7 7" stroke="#888" stroke-width="3" /></svg>
          <i class="tri gray" />
        </label>
        <button v-for="b in winButtons" :key="b.icon" class="win" :aria-label="b.label"><svg viewBox="0 0 40 40" v-html="icons[b.icon]" /></button>
      </div>
    </header>

    <section class="ribbon">
      <div v-for="(g, gi) in groups" :key="gi" class="group" :class="'g' + gi">
        <button v-for="c in g" :key="c.icon" class="cmd" :class="{ on: c.on }">
          <svg viewBox="0 0 40 40" v-html="icons[c.icon]" />
          <span>{{ c.text[0] }}</span><span>{{ c.text[1] }}</span>
          <i v-if="c.drop" class="tri" />
        </button>
        <div v-if="gi === 2" class="stack">
          <button><svg viewBox="0 0 40 40" v-html="icons.insight" />设计洞察</button>
          <button><svg viewBox="0 0 40 40" v-html="icons.plottools" />图解工具<i class="tri" /></button>
        </div>
      </div>
      <div class="stack last">
        <button><svg viewBox="0 0 40 40" v-html="icons.report" />报表</button>
        <button><svg viewBox="0 0 40 40" v-html="icons.reportimg" />为报表包括图像</button>
      </div>
      <button class="fold" aria-label="折叠"><svg viewBox="0 0 14 10"><path d="M1 9l6-7 6 7" fill="none" stroke="#333" stroke-width="2.6" /></svg></button>
    </section>

    <div class="tabrow">
      <button v-for="t in cmdTabs" :key="t.t" class="ctab" :class="{ sel: t.sel, latin: t.latin }" :style="{ width: t.w + 'px' }">{{ t.t }}</button>
      <div class="docbtns"><button v-for="b in docButtons" :key="b" :aria-label="b"><svg viewBox="0 0 40 40" v-html="icons[b]" /></button></div>
    </div>

    <main class="body">
      <aside class="panel">
        <div class="strip" />
        <div class="dots"><i class="dot" /></div>
        <div class="ptabs">
          <button v-for="(p, i) in panelTabs" :key="p" :class="{ sel: i === 2 }" :aria-label="p"><svg viewBox="0 0 40 40" v-html="icons[p]" /></button>
          <span class="rest" />
        </div>
        <h2 class="cfghead">配置</h2>
        <div class="cfgrow">
          <i class="tri mid" /><svg viewBox="0 0 40 40" v-html="icons.part" /><span>fan 配置&nbsp; (Cut)</span>
          <svg class="spin" viewBox="0 0 20 32"><path d="M5 11l5-6 5 6M5 22l5 6 5-6" fill="none" stroke="#555" stroke-width="2.6" /></svg>
        </div>
        <h2 class="statehead">显示状态</h2>
        <div class="states"><svg viewBox="0 0 40 40" v-html="icons.tState" /><span>&lt;Default&gt;_Display State 1</span></div>
        <div class="dots low"><i class="dot" /></div>
        <div class="filter"><svg viewBox="0 0 40 40" v-html="icons.filter" /><i class="tri" /></div>
        <ul class="tree">
          <li v-for="n in tree" :key="n.t" :class="['lv' + n.lv, { bold: n.bold, small: n.small }]">
            <i v-if="n.lv" class="arrow"><i v-if="n.arrow" class="tri mid" :class="{ right: !n.open }" /></i>
            <svg viewBox="0 0 40 40" v-html="icons[n.icon]" /><span>{{ n.t }}</span>
          </li>
        </ul>
      </aside>

      <section class="view">
        <svg class="model" viewBox="514 275 2180 1100" preserveAspectRatio="xMidYMin slice" aria-label="fan">
          <defs>
            <linearGradient id="face" x1=".7" y1="0" x2=".5" y2="1"><stop offset="0" stop-color="#73716c" /><stop offset=".35" stop-color="#85827d" /><stop offset=".75" stop-color="#9c9994" /><stop offset="1" stop-color="#b2b0b0" /></linearGradient>
            <linearGradient id="fold" x1="0" x2="1"><stop offset="0" stop-color="#55534f" stop-opacity=".55" /><stop offset="1" stop-color="#6a6864" stop-opacity="0" /></linearGradient>
          </defs>
          <path d="M1322 415L1495 413V445H1322z" fill="#4d4d4d" />
          <path d="M1495 413L1718 370L1726 445H1495z" fill="#8a8884" />
          <path d="M1322 415L1718 367V373L1651 386L1598 396L1546 404L1494 413z" fill="#10107f" />
          <path :d="speckle" stroke="#9d9dac" stroke-width="1.6" />
          <path d="M1322 415l3 30M1326 416l20 30M1366 415v30M1366 416l-12 30M1368 416l22 30M1408 414l-4 30M1410 414l22 30M1430 414l-6 30M1452 414l-12 30M1454 414l10 30M1466 414l-2 30M1474 414v30M1482 414l4 30M1490 414l-3 30M1495 413v30M1718 368l8 76" stroke="#0c0c86" stroke-width="1.6" fill="none" />
          <path :d="capMesh" class="mesh" />

          <path d="M1895 463L2360 506Q2378 508 2378 520L2374 578L2362 641L2346 708L2323 773L2268 900L2233 960L2176 1045L2138 1100L2040 1205L1977 1267L1940 1303L1881 1343L1837 1375H1422L1434 1310L1443 1180L1450 985V700z" fill="#928f8b" stroke="#2a2a80" stroke-width="1" />
          <polygon :points="pts(bladeL) + ' ' + pts([...bladeR].reverse())" fill="url(#face)" />
          <path d="M1608 985L1571 1180L1497 1375H1570L1650 1180L1720 985z" fill="url(#fold)" />
          <path d="M1895 463L2335 505L2310 524L1895 480z" fill="#8d8a86" />
          <polygon :points="pts(sideL) + ' ' + pts([...fineL].reverse())" fill="#5b5a66" />
          <path :d="bladeMesh" class="mesh" /><path :d="stripMesh" class="mesh" /><path :d="fineMesh" class="mesh" />
          <path :d="sideMesh" class="mesh heavy" /><path :d="bevel" class="mesh" />
          <path d="M1895 480L2310 524M2310 524L2330 506M2302 524L2289 664M2296 523L2281 664" class="mesh" />
          <polyline :points="pts(bladeR)" class="mesh" />
          <path d="M2310 524L2374 578L2300 595L2362 641L2285 664L2346 708M2285 664L2323 773L2237 796L2268 900M2326 512L2374 578M2326 512L2377 524M2141 973L2176 1045L1978 1161L2040 1205M2237 796L2141 973L1978 1161L1881 1343L1786 1320L1750 1375M1978 1161L1860 1290" class="mesh" />
          <path d="M1895 463L2340 506" class="mesh top" /><path d="M2000 475L2330 507" stroke="#060680" stroke-width="6" />
          <polyline :points="pts(orangeL)" class="orange" /><polyline :points="pts(orangeR)" class="orange" />
          <path d="M1404 985L1434 1180" class="axis" /><path d="M1451 1312L1461 1375" class="axis" />
          <path d="M1567 998l12-2 2 11-13 2z" fill="#d100c8" />
          <g fill="#12a312"><path d="M1419 1035h5v7h14v-5l17 8-17 9v-5h-14v7h-5z" /><path d="M1436 1054h5l1 6 12 2 1-5 18 9-19 7v-5l-12-2-1 6h-4z" /><path d="M1394 1320h5l1 8 13 2 2-6 16 13-19 6 1-6-13-2-2 6h-4z" /><path d="M1412 1310h8v4h-8zM1422 1318l12-8v12z" /></g>
          <g class="triad"><path d="M562 1280h24" stroke="#c01a20" stroke-width="6" /><path d="M585 1280L579 1232" stroke="#96e696" stroke-width="5" /><path d="M573 1243l5-9 6 9-5 3z" fill="#0c5a1c" /><path d="M586 1280L610 1275" stroke="#1717a0" stroke-width="6" /><path d="M608 1268l18 5-16 9z" fill="#1717a0" /></g>
          <text x="573" y="1220" class="axl y">Y</text><text x="629" y="1272" class="axl z">Z</text>
          <path d="M928 1134v22l5-5 4 9 4-2-4-9h7z" fill="#fff" stroke="#333" stroke-width="1.6" />
        </svg>

        <div class="info"><p>模型名称: fan</p><p>算例名称: 不兼容网格(-Cut-)</p><p>图解类型: 网格 品质1</p></div>

        <div class="viewbar">
          <template v-for="v in viewTools" :key="v.icon">
            <button class="vt" :aria-label="v.icon"><svg viewBox="0 0 40 40" v-html="icons[v.icon]" /></button>
            <button v-if="v.drop" class="vd" :aria-label="v.icon + ' 选项'"><i class="tri" /></button>
          </template>
        </div>
        <div class="task"><button v-for="(t, i) in taskTabs" :key="t" :class="{ sel: i === 0 }" :aria-label="t"><svg viewBox="0 0 40 40" v-html="icons[t]" /></button></div>
        <button class="handle" aria-label="折叠面板"><i class="dot" /></button>
      </section>
    </main>

    <footer class="doctabs">
      <div class="navs"><button v-for="(p, i) in ['M8 6v12M18 6l-8 6 8 6z', 'M16 6l-8 6 8 6z', 'M9 6l8 6-8 6z', 'M17 6v12M7 6l8 6-8 6z']" :key="i" :aria-label="'标签页 ' + i"><svg viewBox="0 0 24 24"><path :d="p" fill="#83839a" stroke="#83839a" stroke-width="2" /></svg></button></div>
      <button v-for="t in docTabs" :key="t.t" class="dtab" :class="{ sel: t.sel, latin: t.latin, first: t.first }" :style="{ width: t.w + 'px' }"><svg v-if="t.icon" viewBox="0 0 40 40" v-html="icons[t.icon]" />{{ t.t }}</button>
      <span class="rest" />
    </footer>
    <div class="status"><span>SOLIDWORKS Premium 2024 SP5.0</span><span class="editing">在编辑 零件</span><span class="ips">IPS</span><i class="tri gray" /><svg viewBox="0 0 40 40" v-html="icons.tag" /></div>

    <div class="dialog" role="dialog" aria-labelledby="dlgt">
      <div class="dtitle">
        <span id="dlgt">运行指定算例状态</span>
        <button aria-label="最小化"><svg viewBox="0 0 20 20"><path d="M2 9h16" stroke="#222" stroke-width="2" /></svg></button>
        <button aria-label="最大化" disabled><svg viewBox="0 0 20 20"><path d="M2 2h16v16H2z" fill="none" stroke="#ccc" stroke-width="1.6" /></svg></button>
        <button aria-label="关闭"><svg viewBox="0 0 20 20"><path d="M1 1l18 18M19 1L1 19" stroke="#222" stroke-width="1.8" /></svg></button>
      </div>
      <div class="dbody">
        <p id="listlabel">选定算例的状态：</p>
        <div class="frame">
          <table aria-labelledby="listlabel">
            <colgroup><col class="c0" /><col class="c1" /><col class="c2" /><col class="c2" /><col class="c3" /><col class="c3" /><col /></colgroup>
            <thead><tr><th /><th>状态</th><th>算例名称</th><th>配置</th><th>网格状态</th><th>结果状态</th><th>注释</th></tr></thead>
            <tbody>
              <tr v-for="r in studyRows" :key="r.n" :class="{ run: r.run }">
                <th scope="row">{{ r.n }}</th>
                <td class="st"><svg v-if="r.run" viewBox="0 0 42 32"><path d="M0 0h42v32H0z" fill="#7b0081" /><path d="M11 12h20v15H11z" fill="#e4f6dc" /><ellipse cx="21" cy="20" rx="8" ry="7" fill="#9be06a" stroke="#1d7a1d" stroke-width="2.4" /><path d="M19 24l4-9" stroke="#1d7a1d" stroke-width="2.4" /></svg></td>
                <td>{{ r.name }}</td><td class="cut">{{ r.cfg }}</td><td>{{ r.mesh }}</td><td>{{ r.res }}</td><td>{{ r.note }}</td>
              </tr>
            </tbody>
          </table>
          <div class="hscroll">
            <svg viewBox="0 0 12 16"><path d="M9 2L3 8l6 6" fill="none" stroke="#444" stroke-width="2.4" /></svg><i class="thumb" /><svg viewBox="0 0 12 16"><path d="M3 2l6 6-6 6" fill="none" stroke="#444" stroke-width="2.4" /></svg>
          </div>
        </div>
        <div class="actions"><button class="def">取消</button><button>帮助</button></div>
      </div>
    </div>

    <div class="subtitle">OK那么在它计算的过程中</div>
    <div class="mark"><span class="hw"><b>High</b>wah</span><sup>®</sup><span class="xh">兴 华 学 院</span></div>
  </div>
</template>

<style>
body { margin: 0; background: #fff; }
</style>

<style scoped>
* { box-sizing: border-box; }
.app { position: relative; display: flex; flex-direction: column; min-height: 100vh; overflow: hidden; background: #fff; color: #1c1c1c; font-family: "Noto Sans", "Noto Sans CJK SC", sans-serif; font-size: 20px; line-height: 28px; }
button { font: inherit; color: inherit; background: none; border: 0; padding: 0; margin: 0; display: flex; align-items: center; justify-content: center; white-space: nowrap; }
svg { display: block; flex: none; overflow: visible; }
p, h2, ul { margin: 0; padding: 0; list-style: none; }
.defs { position: absolute; width: 0; height: 0; }
.tri { display: block; flex: none; border: 5px solid transparent; border-top: 8px solid #333; border-bottom: 0; }
.tri.gray { border-top-color: #888; }
.tri.mid { border-top-color: #555; }
.tri.right { border: 5px solid transparent; border-left: 7px solid #555; border-right: 0; }
.dot { width: 8px; height: 8px; border-radius: 50%; border: 2px solid #aaa; background: #ddd; }

.title { display: flex; height: 69px; border-bottom: 2px solid #cbcbcb; background: #e5e5e5; }
.menus { width: 848px; display: flex; align-items: center; background: #f7f7f7; border-right: 2px solid #d6d6d6; padding-left: 7px; }
.brand { width: 28px; height: 30px; margin: 0 6px 6px 0; }
.word { width: 163px; color: #d3312f; font-size: 19px; font-style: italic; font-family: "Open Sans", "Noto Sans", sans-serif; padding-bottom: 2px; }
.menubar { display: flex; gap: 23px; font-size: 19px; }
.pin { width: 20px; height: 20px; margin: 0 0 4px 18px; }
.tools { flex: 1; display: flex; align-items: center; padding: 0 8px 3px 27px; }
.tool { width: 60px; height: 63px; }
.tool svg { width: 40px; height: 40px; }
.tool.wide { width: 62px; }
.drop { width: 24px; height: 63px; }
.drop.off .tri { border-top-color: #999; }
.select { display: flex; margin-left: 3px; border: 1px solid #777; }
.select .tool { width: 57px; background: #b1b1b1; }
.select .drop { width: 25px; }
.file { margin-left: 56px; font-size: 18px; padding-top: 3px; white-space: nowrap; }
.search { margin-left: auto; width: 352px; height: 39px; display: flex; align-items: center; background: #fff; border: 1px solid #c4c4c4; padding: 0 7px 0 8px; }
.prompt { width: 24px; height: 26px; }
.search input { flex: 1; min-width: 0; border: 0; outline: 0; background: none; font: inherit; font-size: 22px; line-height: 30px; padding: 0 0 0 12px; }
.search input::placeholder { color: #666; opacity: 1; }
.lens { width: 24px; height: 24px; margin-right: 11px; }
.win { width: 74px; }
.win svg { width: 40px; height: 40px; }
.search + .win { margin-left: 6px; }

.ribbon { display: flex; height: 165px; background: #f6f6f6; border-bottom: 2px solid #8d8d8d; border-right: 1px solid #999; position: relative; }
.group { display: flex; border-right: 1px solid #cfcfcf; margin: 3px 0; }
.g0 { width: 80px; }
.g1 { width: 515px; padding-left: 1px; }
.g2 { width: 393px; }
.cmd { width: 73px; flex-direction: column; justify-content: flex-start; color: #b1b1b1; padding-top: 8px; line-height: 27px; font-size: 20px; }
.g0 .cmd { width: 79px; }
.cmd span { display: block; height: 27px; }
.cmd svg { width: 38px; height: 38px; margin-bottom: 4px; }
.cmd .tri { margin-top: 34px; border-top-color: #888; }
.cmd.on { color: #111; }
.cmd.on .tri { border-top-color: #222; }
.stack { padding: 0 0 0 8px; color: #b1b1b1; }
.stack button { height: 53px; }
.stack svg { width: 38px; height: 38px; margin-right: 9px; }
.stack .tri { margin-left: 16px; border-top-color: #888; }
.stack.last { padding: 3px 0 0 11px; }
.fold { margin: auto 20px 20px auto; }
.fold svg { width: 14px; height: 10px; }

.tabrow { display: flex; height: 41px; position: relative; z-index: 1; }
.ctab { height: 40px; background: #d3d3d3; border-right: 2px solid #8d8d8d; border-bottom: 2px solid #8d8d8d; font-size: 22px; }
.ctab.latin { font-size: 20px; }
.ctab.sel { background: #f7f7f7; margin-top: -2px; height: 42px; padding-top: 2px; }
.docbtns { display: flex; margin: 10px 11px 0 auto; height: 40px; }
.docbtns button { width: 53px; }
.docbtns svg { width: 40px; height: 40px; }

.body { display: flex; flex: 1; }
.panel { width: 514px; background: #f5f5f5; border-right: 2px solid #9a9a9a; border-bottom: 1px solid #bbb; padding-right: 4px; display: flex; flex-direction: column; }
.strip { height: 7px; border-bottom: 1px solid #bbb; }
.dots { height: 28px; border-bottom: 1px solid #bbb; display: flex; align-items: center; justify-content: center; }
.ptabs { display: flex; height: 53px; margin-top: 6px; }
.ptabs button { width: 73px; background: #d3d3d3; border: 1px solid #8d8d8d; border-left: 0; }
.ptabs button.sel { background: #f5f5f5; border-top-color: #ccc; border-bottom-color: #f5f5f5; }
.ptabs svg { width: 38px; height: 38px; }
.ptabs .rest { flex: 1; border-bottom: 1px solid #999; }
.cfghead { height: 54px; border-bottom: 1px solid #aaa; text-align: center; font-size: 24px; line-height: 54px; padding-left: 12px; }
.cfgrow { height: 50px; border-bottom: 1px solid #aaa; display: flex; align-items: center; padding: 12px 0 0 6px; font-size: 21px; }
.cfgrow svg { width: 24px; height: 24px; margin: 0 8px 0 18px; }
.cfgrow .spin { width: 20px; height: 32px; margin: 0 1px 0 auto; background: #ececec; }
.statehead { height: 41px; border-bottom: 1px solid #bbb; text-align: center; font-size: 24px; line-height: 40px; padding-left: 12px; }
.states { height: 93px; border-bottom: 2px solid #bbb; background: #f0f0f0; display: flex; align-items: flex-start; padding: 3px 0 0 33px; color: #999; font-size: 22px; }
.states svg { width: 26px; height: 26px; margin-right: 8px; }
.dots.low { height: 22px; border-bottom: 0; }
.filter { height: 44px; border: 2px solid #cfcfcf; margin: 0 2px 0 3px; display: flex; align-items: center; padding-left: 3px; }
.filter svg { width: 24px; height: 24px; }
.filter .tri { margin: 14px 0 0 0; border-width: 4px; border-top-width: 5px; }
.tree { display: grid; grid-auto-rows: 1fr; height: 538px; font-size: 22px; }
.tree li { display: flex; align-items: center; white-space: nowrap; }
.tree li > svg { width: 25px; height: 25px; margin-right: 7px; }
.tree .arrow { width: 27px; display: flex; }
.lv1 { padding-left: 6px; }
.lv2 { padding-left: 39px; }
.lv3 { padding-left: 71px; }
.small { font-size: 21px; }
.bold { font-weight: 700; }

.view { flex: 1; position: relative; }
.model { position: absolute; inset: 0; width: 100%; height: 100%; overflow: hidden; }
.mesh { fill: none; stroke: #0f0f8c; stroke-width: 1; }
.mesh.heavy { stroke-width: 2; }
.mesh.top { stroke-width: 3; }
.orange { fill: none; stroke: #e0832e; stroke-width: 2; }
.axis { stroke: #2020d8; stroke-width: 3; stroke-dasharray: 22 8 4 8; }
.axl { font-size: 16px; }
.axl.y { fill: #5fa58a; }
.axl.z { fill: #5555c4; }
.info { position: absolute; left: 29px; top: 20px; font-size: 22px; line-height: 28px; color: #111; }
.viewbar { position: absolute; left: 715px; top: 6px; display: flex; }
.vt { width: 53px; height: 42px; }
.vt svg { width: 39px; height: 40px; }
.vd { width: 22px; }
.vd .tri { border-top-color: #999; }
.task { position: absolute; right: 0; top: 58px; width: 68px; border: 1px solid #8d8d8d; border-right: 0; }
.task button { width: 100%; height: 63px; background: #d5d5d5; border-bottom: 1px solid #8d8d8d; }
.task button:last-child { border-bottom: 0; }
.task button.sel { background: #f6f6f6; }
.task svg { width: 38px; height: 38px; }
.handle { position: absolute; left: -2px; top: 496px; width: 17px; height: 68px; background: #f5f5f5; border: 1px solid #9a9a9a; border-left: 0; }
.handle .dot { width: 7px; height: 7px; }

.doctabs { display: flex; height: 36px; background: #f4f4f4; padding: 5px 0 0 3px; }
.navs { width: 112px; display: flex; background: #a9a9c4; border-top: 2px solid #444; }
.navs button { flex: 1; border: 1px solid #8f8fa8; }
.navs svg { width: 20px; height: 20px; }
.dtab { background: #d8d8d8; border: 1px solid #8d8d8d; border-left: 0; border-bottom-width: 2px; font-size: 24px; line-height: 28px; }
.dtab.latin { font-size: 21px; }
.dtab.first { padding-left: 10px; }
.dtab.sel { background: #f7f7f7; border-top-color: #f7f7f7; padding-right: 12px; }
.dtab svg { width: 20px; height: 20px; margin: 0 2px 6px 0; }
.doctabs .rest { flex: 1; border-top: 2px solid #8d8d8d; border-bottom: 2px solid #8d8d8d; }
.status { height: 29px; background: #e5e5e5; display: flex; align-items: center; padding: 0 14px 0 2px; font-size: 21px; line-height: 29px; }
.editing { margin-left: auto; }
.ips { margin: 0 48px 0 188px; font-size: 18px; color: #999; }
.status svg { width: 24px; height: 24px; margin-left: 27px; }

.dialog { position: absolute; left: 793px; top: 437px; width: 1108px; background: #f0f0f0; border: 1px solid #777; box-shadow: 0 4px 30px rgba(0, 0, 0, .38); z-index: 3; }
.dtitle { height: 55px; background: #fff; display: flex; align-items: center; padding: 0 24px 2px 15px; font-size: 21px; }
.dtitle span { margin-right: auto; }
.dtitle button { width: 36px; margin-left: 46px; }
.dtitle svg { width: 18px; height: 18px; }
.dbody { padding: 11px 9px 33px 16px; font-size: 22px; }
.dbody p { margin: 0 0 6px -4px; line-height: 28px; }
.frame { height: 326px; border-top: 2px solid #808080; border-left: 2px solid #808080; background: #fff; display: flex; flex-direction: column; }
table { width: 100%; table-layout: fixed; border-collapse: separate; border-spacing: 0; }
.c0 { width: 32px; }
.c1 { width: 86px; }
.c2 { width: 215px; }
.c3 { width: 171px; }
th, td { padding: 0 0 0 3px; text-align: left; white-space: nowrap; border-right: 1px solid #555; }
th:last-child, td:last-child { border-right: 0; }
thead th { height: 54px; background: #f0f0f0; font-size: 24px; border-bottom: 2px solid #333; }
tbody th { background: #f0f0f0; font-size: 18px; border-right-width: 2px; }
tbody th, td { height: 27px; line-height: 22px; padding-bottom: 3px; border-bottom: 2px solid #777; }
.run td { background: #d0ffd0; }
.cut { font-size: 17px; padding-bottom: 0; }
.st { position: relative; }
.st svg { position: absolute; left: 20px; bottom: -1px; width: 42px; height: 32px; }
.hscroll { margin-top: auto; height: 29px; background: #f0f0f0; display: flex; align-items: center; padding: 0 9px 2px; }
.hscroll svg { width: 12px; height: 16px; }
.hscroll .thumb { width: 80%; height: 27px; background: #cdcdcd; margin: 0 auto 0 9px; }
.actions { display: flex; justify-content: flex-end; gap: 27px; padding: 48px 16px 0 0; }
.actions button { width: 121px; height: 40px; background: #e1e1e1; border: 1px solid #adadad; font-size: 22px; padding-bottom: 2px; }
.actions .def { border: 3px solid #1c74c0; }

.subtitle { position: absolute; left: 850px; top: 1181px; z-index: 4; background: #fff; color: #123f77; font-family: "Noto Sans CJK SC", sans-serif; font-weight: 500; font-size: 82px; line-height: 117px; padding: 0 26px 12px 28px; white-space: nowrap; }
.mark { position: absolute; left: 35px; top: 1238px; z-index: 4; display: flex; align-items: flex-start; color: #c9222b; white-space: nowrap; }
.hw { font-size: 64px; line-height: 88px; font-style: italic; font-weight: 300; font-family: "Open Sans", sans-serif; }
.hw b { font-weight: 800; }
.mark sup { font-size: 30px; line-height: 34px; margin-left: 5px; }
.xh { font-size: 51px; line-height: 88px; font-weight: 700; margin-left: 12px; }
</style>
